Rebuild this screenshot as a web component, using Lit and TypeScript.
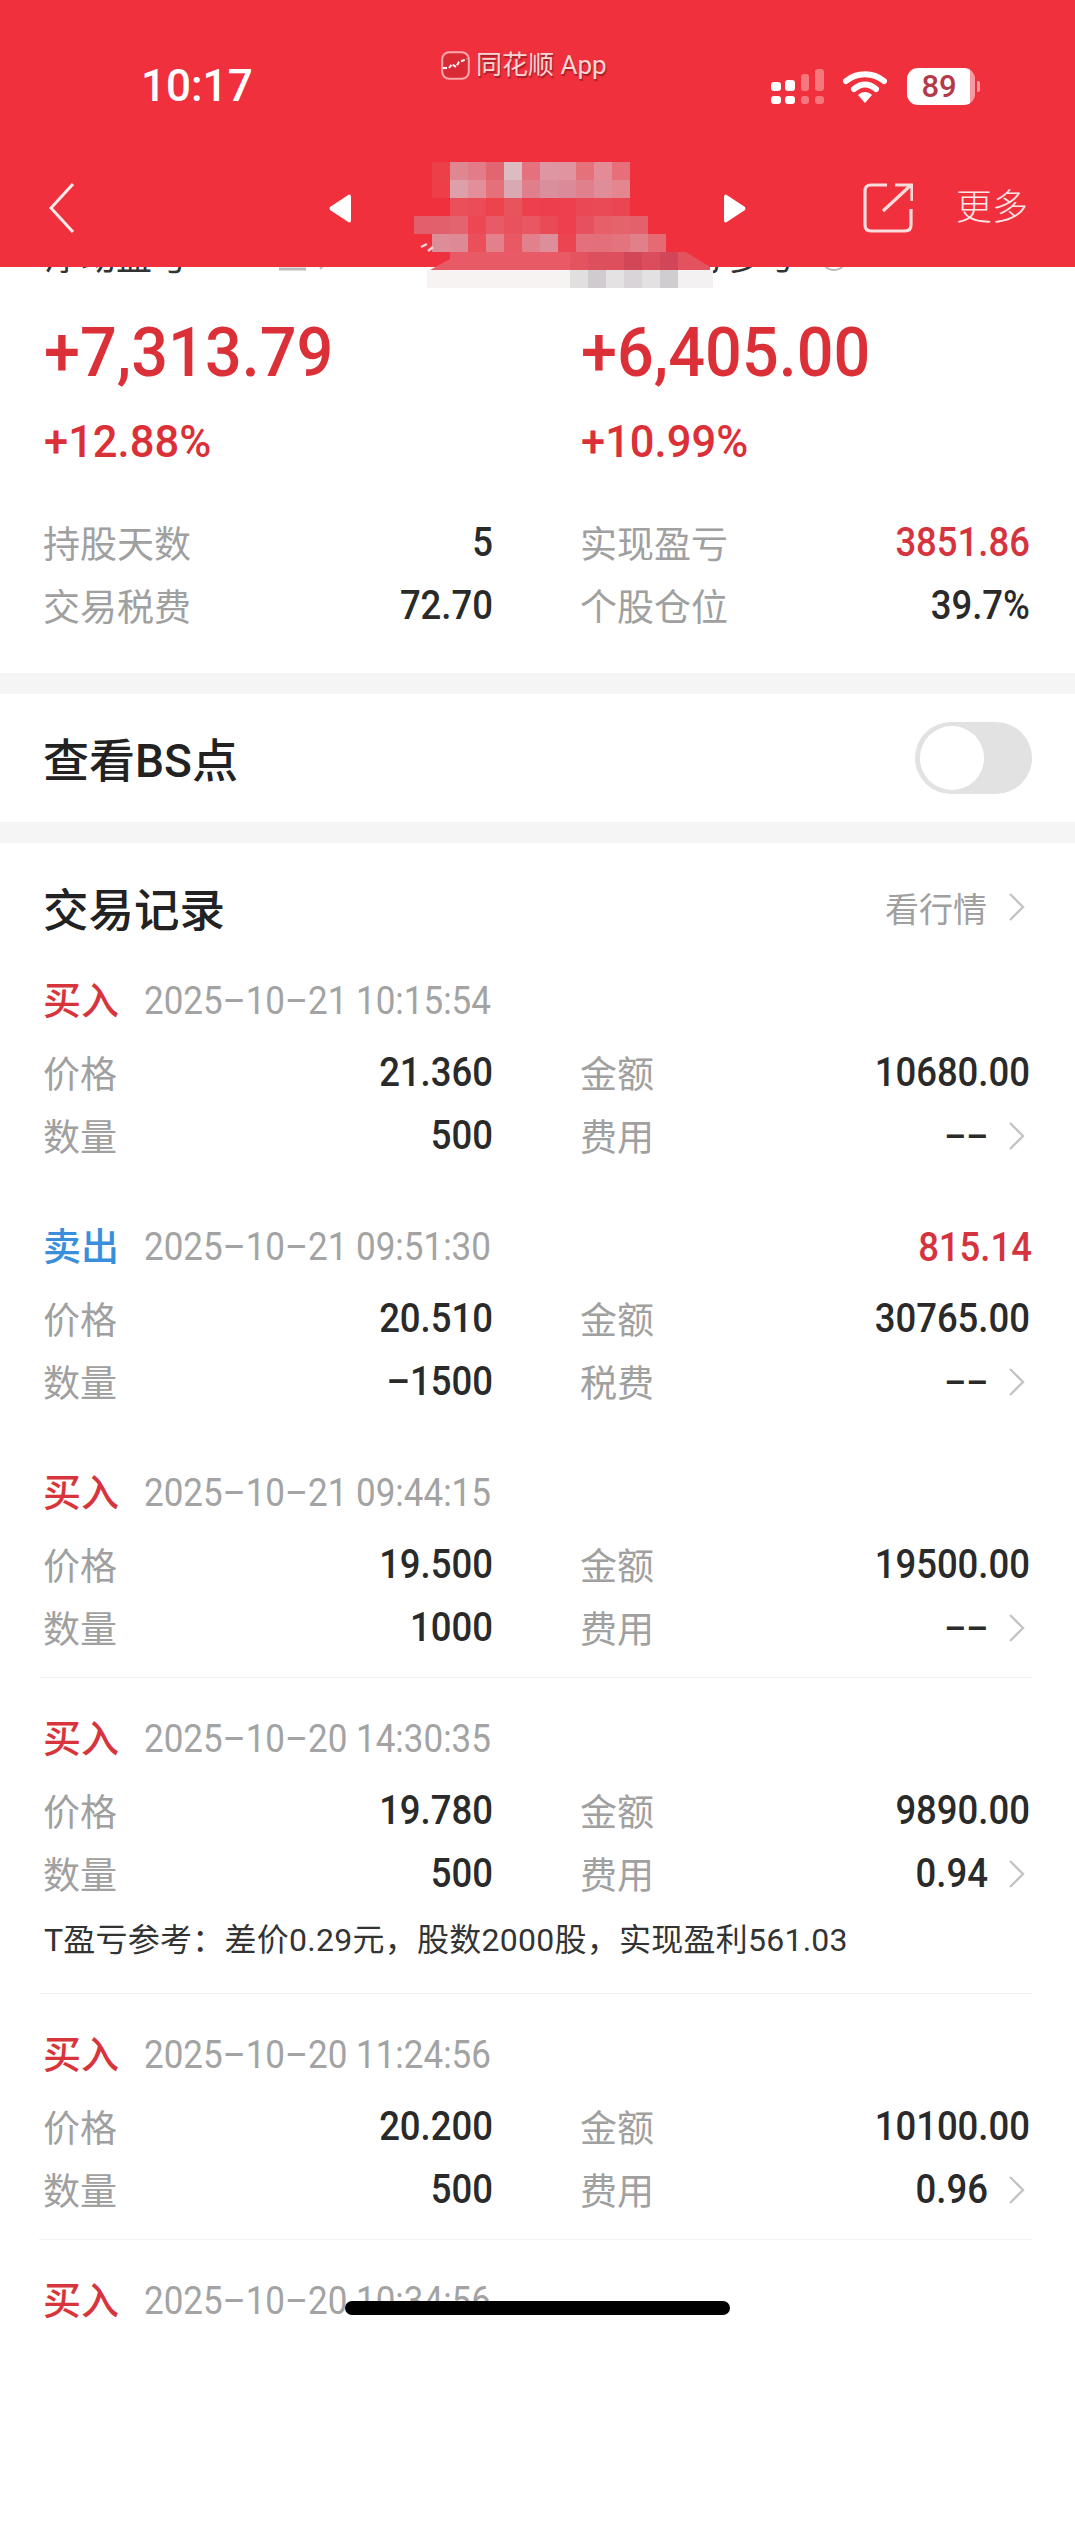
import { LitElement, html, css, svg, nothing } from 'lit';
import { customElement } from 'lit/decorators.js';

interface Trade {
  side: 'buy' | 'sell';
  time: string;
  profit?: string;
  price: string;
  amount: string;
  qty: string;
  feeLabel: string;
  fee: string;
  note?: string;
  divider?: boolean;
}

const TRADES: Trade[] = [
  { side: 'buy', time: '2025–10–21 10:15:54', price: '21.360', amount: '10680.00', qty: '500', feeLabel: '费用', fee: '––' },
  { side: 'sell', time: '2025–10–21 09:51:30', profit: '815.14', price: '20.510', amount: '30765.00', qty: '–1500', feeLabel: '税费', fee: '––' },
  { side: 'buy', time: '2025–10–21 09:44:15', price: '19.500', amount: '19500.00', qty: '1000', feeLabel: '费用', fee: '––', divider: true },
  { side: 'buy', time: '2025–10–20 14:30:35', price: '19.780', amount: '9890.00', qty: '500', feeLabel: '费用', fee: '0.94', note: 'T盈亏参考：差价0.29元，股数2000股，实现盈利561.03', divider: true },
  { side: 'buy', time: '2025–10–20 11:24:56', price: '20.200', amount: '10100.00', qty: '500', feeLabel: '费用', fee: '0.96', divider: true },
];

// blurred-out stock name in the reference
const MOSAIC: { x: number; y: number; cells: string[] }[] = [
  { x: 432, y: 162, cells: ['#ec4049', '#df8791', '#e17c88', '#e2666f', '#dcbcc0', '#e6717e', '#dd96a2', '#e094a0', '#e5727b', '#e38c96', '#e66f7a'] },
  { x: 432, y: 180, cells: ['#ee3f48', '#dea0a8', '#e28f9a', '#e5707a', '#d9a8b2', '#e07f8c', '#d98f9d', '#db8a99', '#e0808c', '#df8e99', '#e38690'] },
  { x: 450, y: 198, cells: ['#e9505a', '#ea4d58', '#ec434d', '#e8545e', '#ec414c', '#eb3f4b', '#ec414c', '#ea4854', '#ea4a56', '#ea4652'] },
  { x: 414, y: 216, cells: ['#e35f6c', '#e25f6c', '#e3636f', '#ec4752', '#e85a65', '#e8525d', '#e75862', '#ea4a55', '#ec414d', '#e7505e', '#e56068', '#e5636b', '#e4606a'] },
  { x: 432, y: 234, cells: ['#dd8d98', '#de8a96', '#ea4f5a', '#e2808c', '#e85865', '#e2808c', '#dc8e9a', '#ec4450', '#e4707c', '#e36f7a', '#e3747e', '#e2808a', '#e56a74'] },
];

const MOSAIC_LOW = ['#e85b66', '#e85b66', '#e85b66', '#e85b66', '#e85b66', '#e85b66', '#e85b66', '#e85b66', '#e4545f', '#de4f5e', '#de4f5e', '#d34658', '#db4d5c', '#d14658', '#e3525f', '#e3525f'];
const MOSAIC_WHITE = ['#f7f3f3', '#f7f3f3', '#f7f3f3', '#f7f3f3', '#f7f3f3', '#f7f3f3', '#f7f3f3', '#f7f3f3', '#e2dfe0', '#cfcbcf', '#e5e2e3', '#d8d4d7', '#e4e1e3', '#d0cdd1', '#f3f1f2', '#f3f1f2'];

const chevron = html`<svg class="chev" viewBox="0 0 17 30"><path d="M2 2 L15 15 L2 28" fill="none" stroke="#c4c4c4" stroke-width="2.4"/></svg>`;

@customElement('app-root')
export class AppRoot extends LitElement {
  static styles = css`
    :host {
      display: block;
      position: relative;
      width: 1075px;
      height: 2533px;
      overflow: hidden;
      background: #fff;
      color: #222;
      font-family: Roboto, 'Noto Sans CJK SC', sans-serif;
    }
    .header {
      position: relative;
      z-index: 2;
      height: 267px;
      background: #f0303c;
      color: #fff;
    }
    .status {
      display: flex;
      height: 80px;
      padding: 46px 100px 0 141px;
      align-items: center;
    }
    .time {
      width: 300px;
      font-size: 44px;
      font-weight: 500;
    }
    .app {
      display: flex;
      align-items: center;
      gap: 6px;
      align-self: flex-start;
      margin-top: 4px;
      font-size: 26px;
      line-height: 30px;
      color: #f6d5d7;
      text-shadow: 1px 2px 1px rgba(110, 20, 30, 0.6);
    }
    .app svg { width: 29px; height: 29px; }
    .sys {
      display: flex;
      align-items: center;
      margin-left: auto;
    }
    .signal { width: 54px; height: 37px; }
    .wifi { width: 44px; height: 34px; margin-left: 19px; }
    .battery {
      position: relative;
      width: 68px;
      height: 37px;
      margin-left: 20px;
      border-radius: 11px;
      background: linear-gradient(to right, #fff 92%, #f59aa0 92%);
      color: #b5394a;
      font-size: 31px;
      font-weight: 500;
      line-height: 37px;
      text-align: center;
      text-indent: -4px;
    }
    .battery::after {
      content: '';
      position: absolute;
      right: -5px;
      top: 13px;
      width: 3px;
      height: 11px;
      border-radius: 0 2px 2px 0;
      background: #f59aa0;
    }
    .nav {
      display: flex;
      align-items: center;
      height: 76px;
      margin-top: 44px;
      padding-left: 48px;
    }
    .back { width: 27px; height: 52px; }
    .prev { width: 22px; height: 31px; margin-left: 254px; }
    .next { width: 22px; height: 31px; margin-left: 373px; }
    .share { width: 50px; height: 50px; margin-left: 117px; }
    .more {
      margin-left: 43px;
      font-size: 36px;
      font-weight: 300;
      line-height: 40px;
      color: #fbe6e7;
    }
    .mosaic {
      position: absolute;
      z-index: 3;
      left: 0;
      top: 0;
      width: 1075px;
      height: 300px;
      pointer-events: none;
    }
    .hero {
      margin-top: -34px;
      padding: 0 45px 36px 44px;
    }
    .cols {
      display: grid;
      grid-template-columns: 449px 449px;
      column-gap: 88px;
    }
    .clip-label {
      display: flex;
      align-items: center;
      height: 50px;
      font-size: 36px;
      line-height: 50px;
      color: #333;
    }
    .mark { margin-left: 90px; flex: none; }
    .help { margin-left: 23px; flex: none; }
    .big {
      margin-top: 29px;
      font-size: 64.8px;
      font-weight: 500;
      line-height: 80px;
      color: #dc3038;
      transform: scaleY(1.07);
    }
    .pct {
      margin-top: 26px;
      font-size: 43.5px;
      font-weight: 500;
      line-height: 50px;
      color: #dc3038;
    }
    .stats { margin-top: 43px; }
    .kv {
      display: flex;
      align-items: center;
      justify-content: space-between;
      height: 63px;
    }
    .key {
      margin: 0 0 2px -1px;
      font-size: 37px;
      color: #a0a0a0;
    }
    .val {
      display: inline-block;
      font-size: 36.5px;
      font-weight: 500;
      color: #2a2a2a;
      transform: scaleY(1.1);
    }
    .val.dash { font-size: 34px; }
    .red { color: #d5343f; }
    .gap {
      height: 21px;
      background: #f5f5f5;
    }
    .bs {
      display: flex;
      align-items: center;
      justify-content: space-between;
      height: 128px;
      padding: 0 43px 0 43px;
      font-size: 46px;
      font-weight: 500;
    }
    .bs span { margin-bottom: 3px; }
    .toggle {
      display: flex;
      align-items: center;
      width: 117px;
      height: 72px;
      padding-left: 5px;
      box-sizing: border-box;
      border-radius: 36px;
      background: #e2e2e2;
    }
    .knob {
      width: 64px;
      height: 64px;
      border-radius: 50%;
      background: #fff;
    }
    .trades { padding: 0 43px 0 44px; }
    .title {
      display: flex;
      align-items: center;
      justify-content: space-between;
      height: 50px;
      margin-left: -1px;
      padding-top: 39px;
      padding-bottom: 8px;
      font-size: 45.5px;
      font-weight: 500;
    }
    .link {
      display: flex;
      align-items: center;
      gap: 21px;
      padding-right: 7px;
      font-size: 34px;
      font-weight: 400;
      color: #a0a0a0;
    }
    .chev { width: 17px; height: 30px; flex: none; }
    .trade {
      margin-left: -5px;
      padding: 36px 0 18px 5px;
      border-bottom: 1px solid transparent;
    }
    .trade.divider { border-bottom-color: #f2f2f2; }
    .head {
      display: flex;
      align-items: center;
      height: 50px;
      margin-bottom: 15px;
    }
    .side {
      width: 100px;
      margin-left: -1px;
      margin-right: 1px;
      font-size: 38px;
      font-weight: 500;
      line-height: 50px;
    }
    .side.buy { color: #d8343c; }
    .side.sell { color: #3a8fdc; }
    .when {
      display: inline-block;
      font-size: 35px;
      color: #a3a3a3;
      transform: scaleY(1.1);
    }
    .profit {
      margin-left: auto;
      color: #d5343f;
    }
    .fee {
      display: flex;
      align-items: center;
      gap: 20px;
    }
    .fee .chev { margin-right: 5px; }
    .note {
      height: 70px;
      font-size: 32px;
      line-height: 70px;
      letter-spacing: 0.25px;
      color: #333;
    }
    .home {
      position: absolute;
      z-index: 4;
      left: 345px;
      top: 2301px;
      width: 385px;
      height: 14px;
      border-radius: 7px;
      background: #000;
    }
  `;

  renderMosaic() {
    return html`<svg class="mosaic" viewBox="0 0 1075 300">
      <defs>
        <clipPath id="low"><path d="M430 270 L450 259 L450 252 L686 252 L710 267 L710 270 Z"/></clipPath>
        <clipPath id="bottom"><path d="M427 270 H713 V288 H427 Z"/></clipPath>
      </defs>
      ${MOSAIC.map(r => r.cells.map((c, i) => svg`<rect x=${r.x + i * 18} y=${r.y} width="18" height="18" fill=${c}/>`))}
      <g clip-path="url(#low)">${MOSAIC_LOW.map((c, i) => svg`<rect x=${426 + i * 18} y="252" width="18" height="18" fill=${c}/>`)}</g>
      <g clip-path="url(#bottom)">${MOSAIC_WHITE.map((c, i) => svg`<rect x=${426 + i * 18} y="270" width="18" height="18" fill=${c}/>`)}</g>
      <path d="M421 247 L427 244 M428 251 L433 247" stroke="#f6d5d7" stroke-width="2.5"/>
    </svg>`;
  }

  renderHeader() {
    return html`<div class="header">
      <div class="status">
        <div class="time">10:17</div>
        <div class="app">
          <svg viewBox="0 0 29 29">
            <rect x="1.2" y="1.2" width="26.6" height="26.6" rx="7" fill="#d92a35" stroke="#f7a8ad" stroke-width="2"/>
            <path d="M2 17 H8 L11 13 L15 16 L18 11 L26 8" fill="none" stroke="#fff" stroke-width="2" stroke-dasharray="4 2"/>
          </svg>
          <span>同花顺 App</span>
        </div>
        <div class="sys">
          <svg class="signal" viewBox="0 0 54 37">
            <rect x="1" y="14" width="10" height="9" rx="3" fill="#fff"/>
            <rect x="1" y="28" width="10" height="8" rx="3" fill="#fff"/>
            <rect x="15" y="12" width="10" height="11" rx="3" fill="#fff"/>
            <rect x="15" y="28" width="10" height="8" rx="3" fill="#fff"/>
            <rect x="31" y="6" width="8" height="17" rx="3" fill="#f7777f"/>
            <rect x="31" y="28" width="8" height="8" rx="3" fill="#f7777f"/>
            <rect x="45" y="1" width="9" height="22" rx="3" fill="#f7777f"/>
            <rect x="45" y="28" width="9" height="8" rx="3" fill="#f7777f"/>
          </svg>
          <svg class="wifi" viewBox="0 0 44 34">
            <path d="M3 12 C14 3 30 3 41 12" fill="none" stroke="#fff" stroke-width="6" stroke-linecap="round"/>
            <path d="M11 20 C18 14 26 14 33 20" fill="none" stroke="#fff" stroke-width="6" stroke-linecap="round"/>
            <path d="M15 26 C19 22 25 22 29 26 L22 34 Z" fill="#fff"/>
          </svg>
          <div class="battery">89</div>
        </div>
      </div>
      <div class="nav">
        <svg class="back" viewBox="0 0 27 52"><path d="M25 2 L3 26 L25 50" fill="none" stroke="#fdeaea" stroke-width="3"/></svg>
        <svg class="prev" viewBox="0 0 22 31"><path d="M20 1.5 Q22 1 22 4 V27 Q22 30 20 29.5 L1 17 Q0 15.5 1 14 Z" fill="#fff"/></svg>
        <svg class="next" viewBox="0 0 22 31"><path d="M2 1.5 Q0 1 0 4 V27 Q0 30 2 29.5 L21 17 Q22 15.5 21 14 Z" fill="#fff"/></svg>
        <svg class="share" viewBox="0 0 50 50">
          <path d="M24 2 H8 Q2 2 2 8 V42 Q2 48 8 48 H42 Q48 48 48 42 V26" fill="none" stroke="#fbdcdc" stroke-width="3.2"/>
          <path d="M20 28 L48 2 M32 2 H49 V18" fill="none" stroke="#fbdcdc" stroke-width="3.2"/>
        </svg>
        <span class="more">更多</span>
      </div>
    </div>`;
  }

  renderTrade(t: Trade) {
    return html`<div class="trade ${t.divider ? 'divider' : ''}">
      <div class="head">
        <span class="side ${t.side}">${t.side === 'buy' ? '买入' : '卖出'}</span>
        <span class="when">${t.time}</span>
        ${t.profit ? html`<span class="val profit">${t.profit}</span>` : nothing}
      </div>
      <div class="cols">
        <div class="kv"><span class="key">价格</span><span class="val">${t.price}</span></div>
        <div class="kv"><span class="key">金额</span><span class="val">${t.amount}</span></div>
        <div class="kv"><span class="key">数量</span><span class="val">${t.qty}</span></div>
        <div class="kv">
          <span class="key">${t.feeLabel}</span>
          <div class="fee"><span class="val ${t.fee === '––' ? 'dash' : ''}">${t.fee}</span>${chevron}</div>
        </div>
      </div>
      ${t.note ? html`<div class="note">${t.note}</div>` : nothing}
    </div>`;
  }

  render() {
    return html`
      ${this.renderHeader()}
      ${this.renderMosaic()}
      <div class="hero">
        <div class="cols">
          <div>
            <div class="clip-label">浮动盈亏
              <svg class="mark" width="52" height="30" viewBox="0 0 52 30"><path d="M1 26 H28" stroke="#bbb" stroke-width="3"/><path d="M42 10 L50 18 L42 26" fill="none" stroke="#bbb" stroke-width="2"/></svg>
            </div>
            <div class="big">+7,313.79</div>
            <div class="pct">+12.88%</div>
          </div>
          <div>
            <div class="clip-label">当日盈亏参考
              <svg class="help" width="28" height="28" viewBox="0 0 28 28"><circle cx="14" cy="14" r="12" fill="none" stroke="#bbb" stroke-width="2"/></svg>
            </div>
            <div class="big">+6,405.00</div>
            <div class="pct">+10.99%</div>
          </div>
        </div>
        <div class="cols stats">
          <div class="kv"><span class="key">持股天数</span><span class="val">5</span></div>
          <div class="kv"><span class="key">实现盈亏</span><span class="val red">3851.86</span></div>
          <div class="kv"><span class="key">交易税费</span><span class="val">72.70</span></div>
          <div class="kv"><span class="key">个股仓位</span><span class="val">39.7%</span></div>
        </div>
      </div>
      <div class="gap"></div>
      <div class="bs">
        <span>查看BS点</span>
        <div class="toggle"><div class="knob"></div></div>
      </div>
      <div class="gap"></div>
      <div class="trades">
        <div class="title">
          <span>交易记录</span>
          <span class="link">看行情${chevron}</span>
        </div>
        ${TRADES.map(t => this.renderTrade(t))}
        <div class="trade">
          <div class="head">
            <span class="side buy">买入</span>
            <span class="when">2025–10–20 10:34:56</span>
          </div>
        </div>
      </div>
      <div class="home"></div>
    `;
  }
}
